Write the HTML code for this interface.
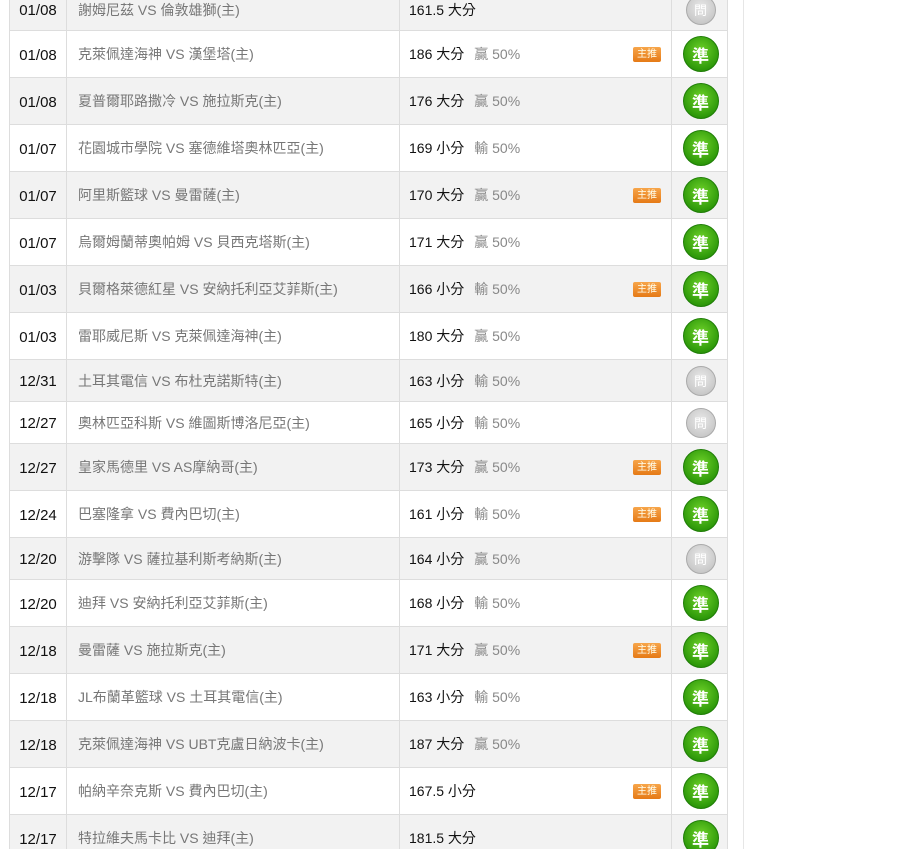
<!DOCTYPE html>
<html style="overflow:hidden"><head><meta charset="utf-8"><style>
html,body{margin:0;width:908px;height:849px;overflow:hidden}
body{background:#fff;font-family:"Liberation Sans","Noto Sans CJK TC",sans-serif;position:relative}
.vl{position:absolute;left:743px;top:0;width:1px;height:849px;background:#e6e6e6}
.r{position:absolute;left:9px;width:719px;border:1px solid #ddd;border-top:none;box-sizing:border-box;font-size:14px}
.g{background:#f2f2f2}
.c{position:absolute;top:0;bottom:0;display:flex;align-items:center}
.d{left:0;width:57px;justify-content:center;color:#111;font-size:15px;border-right:1px solid #ddd;padding-top:2px;box-sizing:border-box}
.m{left:57px;width:333px;padding-left:11px;box-sizing:border-box;color:#777;border-right:1px solid #ddd}
.p{left:390px;width:272px;padding-left:9px;box-sizing:border-box;color:#111;border-right:1px solid #ddd}
.p i{font-style:normal;color:#888;margin-left:10px}
.i{left:662px;width:57px;justify-content:center}
.b{position:absolute;right:10px;top:50%;margin-top:-7px;width:28px;height:15px;background:linear-gradient(#f7a54a,#e57a16);color:#ffe;font-size:10px;line-height:15px;text-align:center;border-radius:2px}
.ok{width:34px;height:34px;border-radius:50%;background:radial-gradient(circle at 50% 40%,#6fd22a,#2f9a0a 70%,#1d7a05);border:1px solid #1f7d07;color:#fff;font-size:17px;font-weight:bold;display:flex;align-items:center;justify-content:center}
.no{width:28px;height:28px;border-radius:50%;background:radial-gradient(circle at 50% 40%,#e8e8e8,#bdbdbd);border:1px solid #aaa;color:#fff;font-size:13px;display:flex;align-items:center;justify-content:center}
</style></head><body>
<div class="vl"></div>
<div class="r g" style="top:-11px;height:42px"><div class="c d">01/08</div><div class="c m">謝姆尼茲 VS 倫敦雄獅(主)</div><div class="c p">161.5 大分</div><div class="c i"><div class="no">問</div></div></div>
<div class="r" style="top:31px;height:47px"><div class="c d">01/08</div><div class="c m">克萊佩達海神 VS 漢堡塔(主)</div><div class="c p">186 大分<i>贏 50%</i><span class="b">主推</span></div><div class="c i"><div class="ok">準</div></div></div>
<div class="r g" style="top:78px;height:47px"><div class="c d">01/08</div><div class="c m">夏普爾耶路撒冷 VS 施拉斯克(主)</div><div class="c p">176 大分<i>贏 50%</i></div><div class="c i"><div class="ok">準</div></div></div>
<div class="r" style="top:125px;height:47px"><div class="c d">01/07</div><div class="c m">花園城市學院 VS 塞德維塔奧林匹亞(主)</div><div class="c p">169 小分<i>輸 50%</i></div><div class="c i"><div class="ok">準</div></div></div>
<div class="r g" style="top:172px;height:47px"><div class="c d">01/07</div><div class="c m">阿里斯籃球 VS 曼雷薩(主)</div><div class="c p">170 大分<i>贏 50%</i><span class="b">主推</span></div><div class="c i"><div class="ok">準</div></div></div>
<div class="r" style="top:219px;height:47px"><div class="c d">01/07</div><div class="c m">烏爾姆蘭蒂奧帕姆 VS 貝西克塔斯(主)</div><div class="c p">171 大分<i>贏 50%</i></div><div class="c i"><div class="ok">準</div></div></div>
<div class="r g" style="top:266px;height:47px"><div class="c d">01/03</div><div class="c m">貝爾格萊德紅星 VS 安納托利亞艾菲斯(主)</div><div class="c p">166 小分<i>輸 50%</i><span class="b">主推</span></div><div class="c i"><div class="ok">準</div></div></div>
<div class="r" style="top:313px;height:47px"><div class="c d">01/03</div><div class="c m">雷耶威尼斯 VS 克萊佩達海神(主)</div><div class="c p">180 大分<i>贏 50%</i></div><div class="c i"><div class="ok">準</div></div></div>
<div class="r g" style="top:360px;height:42px"><div class="c d">12/31</div><div class="c m">土耳其電信 VS 布杜克諾斯特(主)</div><div class="c p">163 小分<i>輸 50%</i></div><div class="c i"><div class="no">問</div></div></div>
<div class="r" style="top:402px;height:42px"><div class="c d">12/27</div><div class="c m">奧林匹亞科斯 VS 維圖斯博洛尼亞(主)</div><div class="c p">165 小分<i>輸 50%</i></div><div class="c i"><div class="no">問</div></div></div>
<div class="r g" style="top:444px;height:47px"><div class="c d">12/27</div><div class="c m">皇家馬德里 VS AS摩納哥(主)</div><div class="c p">173 大分<i>贏 50%</i><span class="b">主推</span></div><div class="c i"><div class="ok">準</div></div></div>
<div class="r" style="top:491px;height:47px"><div class="c d">12/24</div><div class="c m">巴塞隆拿 VS 費內巴切(主)</div><div class="c p">161 小分<i>輸 50%</i><span class="b">主推</span></div><div class="c i"><div class="ok">準</div></div></div>
<div class="r g" style="top:538px;height:42px"><div class="c d">12/20</div><div class="c m">游擊隊 VS 薩拉基利斯考納斯(主)</div><div class="c p">164 小分<i>贏 50%</i></div><div class="c i"><div class="no">問</div></div></div>
<div class="r" style="top:580px;height:47px"><div class="c d">12/20</div><div class="c m">迪拜 VS 安納托利亞艾菲斯(主)</div><div class="c p">168 小分<i>輸 50%</i></div><div class="c i"><div class="ok">準</div></div></div>
<div class="r g" style="top:627px;height:47px"><div class="c d">12/18</div><div class="c m">曼雷薩 VS 施拉斯克(主)</div><div class="c p">171 大分<i>贏 50%</i><span class="b">主推</span></div><div class="c i"><div class="ok">準</div></div></div>
<div class="r" style="top:674px;height:47px"><div class="c d">12/18</div><div class="c m">JL布蘭革籃球 VS 土耳其電信(主)</div><div class="c p">163 小分<i>輸 50%</i></div><div class="c i"><div class="ok">準</div></div></div>
<div class="r g" style="top:721px;height:47px"><div class="c d">12/18</div><div class="c m">克萊佩達海神 VS UBT克盧日納波卡(主)</div><div class="c p">187 大分<i>贏 50%</i></div><div class="c i"><div class="ok">準</div></div></div>
<div class="r" style="top:768px;height:47px"><div class="c d">12/17</div><div class="c m">帕納辛奈克斯 VS 費內巴切(主)</div><div class="c p">167.5 小分<span class="b">主推</span></div><div class="c i"><div class="ok">準</div></div></div>
<div class="r g" style="top:815px;height:47px"><div class="c d">12/17</div><div class="c m">特拉維夫馬卡比 VS 迪拜(主)</div><div class="c p">181.5 大分</div><div class="c i"><div class="ok">準</div></div></div>
</body></html>
